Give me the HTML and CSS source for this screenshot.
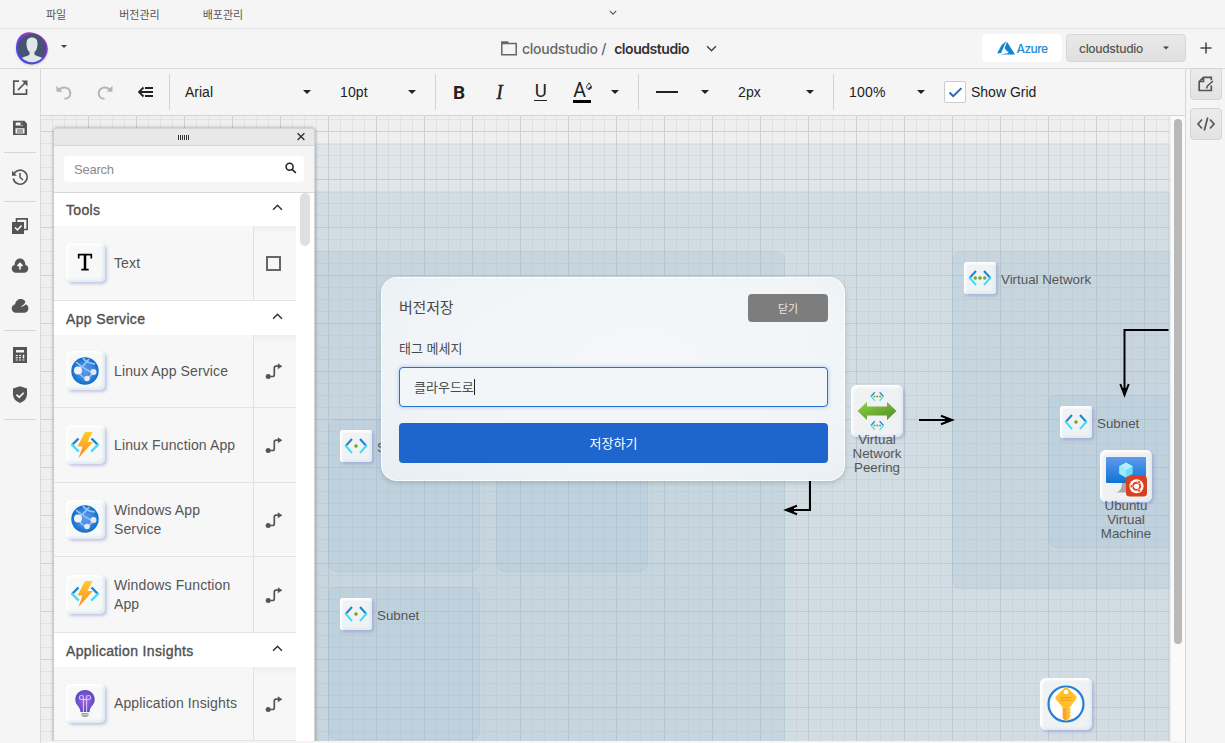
FILE: index.html
```html
<!DOCTYPE html>
<html lang="ko">
<head>
<meta charset="utf-8">
<title>cloudstudio</title>
<link rel="stylesheet" href="styles.css">
</head>
<body>
<svg class="defs" aria-hidden="true">
  <defs>
    <linearGradient id="gBlue" x1="0" y1="0" x2="0" y2="1"><stop offset="0" stop-color="#5e9bee"/><stop offset="1" stop-color="#0f74d2"/></linearGradient>
    <radialGradient id="gGlobe"><stop offset="0" stop-color="#5c9bf0"/><stop offset=".55" stop-color="#4088e2"/><stop offset="1" stop-color="#0b6fcc"/></radialGradient>
    <linearGradient id="gBolt" x1="0" y1="0" x2="0" y2="1"><stop offset="0" stop-color="#ffcb2e"/><stop offset="1" stop-color="#fb8c22"/></linearGradient>
    <linearGradient id="gGreen" x1="0" y1="0" x2="1" y2="1"><stop offset="0" stop-color="#8ad640"/><stop offset="1" stop-color="#55872d"/></linearGradient>
    <radialGradient id="gBulb"><stop offset="0" stop-color="#a667e0"/><stop offset="1" stop-color="#6049c4"/></radialGradient>
  </defs>
  <symbol id="caret" viewBox="0 0 8 4"><path d="M0 0h8L4 4z" fill="currentColor"/></symbol>
  <symbol id="chev" viewBox="0 0 10 6"><path d="M1 1l4 4 4-4" fill="none" stroke="currentColor" stroke-width="1.4"/></symbol>
  <symbol id="globe" viewBox="0 0 28 28">
    <circle cx="14" cy="14" r="13.7" fill="url(#gGlobe)"/>
    <path d="M5 5q8 7 19 12M12 1q3 5 12 6M7 13Q13 9 18 2M7 14q3 6 9 8l7-7" fill="none" stroke="#9cc6f4" stroke-width="1.6"/>
    <circle cx="7" cy="13.5" r="4" fill="#f2f2f2"/><circle cx="22.5" cy="15" r="3" fill="#e4e8ee"/><circle cx="16" cy="21.5" r="2.8" fill="#e6e9ee"/>
  </symbol>
  <symbol id="func" viewBox="0 0 30 26">
    <path d="M8.500 6.500L2 13" stroke="#1885d9" stroke-width="2.400"/><path d="M1.600 12.400l7.200 7.200" stroke="#45ddf6" stroke-width="2.400"/>
    <path d="M21.500 6.500L28 13" stroke="#1885d9" stroke-width="2.400"/><path d="M28.400 12.400l-7.200 7.200" stroke="#45ddf6" stroke-width="2.400"/>
    <path d="M15 0h7.500l-5 10h5.500L8.500 26l4-11.500H7.500z" fill="url(#gBolt)"/>
  </symbol>
  <symbol id="bulb" viewBox="0 0 20 27">
    <path d="M10 0C4.300 0 .3 4.300.3 9.500c0 6 5 6.800 5.200 12.500h9c.2-5.700 5.200-6.500 5.200-12.500C19.700 4.300 15.700 0 10 0z" fill="url(#gBulb)"/>
    <path d="M8.400 22V9.500H6.300a2 2 0 1 1 2.100-2.100v2.100h3.200V7.400a2 2 0 1 1 2.100 2.100h-2.100V22" fill="none" stroke="#d9c6f4" stroke-width="1.100"/>
    <path d="M6.500 23h7v2.500L12 27H8l-1.500-1.500z" fill="#a5a5a5"/><path d="M6.500 24.700h7" stroke="#ddd" stroke-width=".7"/>
  </symbol>
  <symbol id="subnet" viewBox="0 0 24 16">
    <path d="M8 1L1.600 8" stroke="#1e85d6" stroke-width="2"/><path d="M1.400 7.500L8 15" stroke="#46dcf6" stroke-width="2"/>
    <path d="M16 1l6.400 7" stroke="#1e85d6" stroke-width="2"/><path d="M22.600 7.500L16 15" stroke="#46dcf6" stroke-width="2"/>
    <circle cx="12" cy="8" r="1.800" fill="#6da832"/>
  </symbol>
  <symbol id="vnet" viewBox="0 0 24 16">
    <use href="#subnet" width="24" height="16"/><circle cx="7.300" cy="8" r="1.700" fill="#6da832"/><circle cx="16.700" cy="8" r="1.700" fill="#6da832"/>
  </symbol>
  <symbol id="route" viewBox="0 0 18 18">
    <path d="M3 14.500h4.500c1.300 0 1.800-.6 1.800-1.800V6c0-1.200.6-1.900 1.800-1.900H14" fill="none" stroke="#555" stroke-width="1.700"/>
    <circle cx="3.200" cy="14.500" r="2.500" fill="#555"/><path d="M12.800 1.200L17.300 4.200l-4.500 3z" fill="#555"/>
  </symbol>
</svg>

<div class="app">
  <nav class="menubar">
    <span>파일</span><span>버전관리</span><span>배포관리</span>
    <svg class="menubar-toggle"><use href="#chev"/></svg>
  </nav>

  <header class="header">
    <div class="user">
      <svg class="avatar" viewBox="0 0 34 34">
        <defs><linearGradient id="ring" x1="0" y1="1" x2=".6" y2="0"><stop offset=".3" stop-color="#4a49ee"/><stop offset="1" stop-color="#b52cc8"/></linearGradient>
        <clipPath id="face"><circle cx="17" cy="17" r="14.200"/></clipPath></defs>
        <path d="M14.500 1.300C24 1.500 33 9 32.800 18A15.900 15.900 0 0 1 1 17C1 8 6 1.300 14.500 1.300z" fill="url(#ring)"/>
        <circle cx="17" cy="17" r="14.200" fill="#475373"/>
        <g clip-path="url(#face)"><path d="M17 6.500c-4 0-5.800 2.500-5.500 7 .2 4 1.500 6.500 3 7.500v2.500c-2 2-7 2-8.500 4.500L17 34l11-6c-1.500-2.500-6.500-2.500-8.500-4.500V21c1.500-1 2.800-3.500 3-7.500.3-4.500-1.500-7-5.500-7z" fill="#e0e7e9"/></g>
      </svg>
      <svg class="caret caret-sm"><use href="#caret"/></svg>
    </div>
    <div class="crumbs">
      <svg class="folder" viewBox="0 0 16 15"><path d="M.8 2.500h14.400v11.200H.8zM.8 2.500V1h5.700l1 1.500" fill="none" stroke="#666" stroke-width="1.500"/><path d="M1 1h6v2H1z" fill="#666"/></svg>
      <span class="crumb-parent">cloudstudio /</span>
      <span class="crumb-current">cloudstudio</span>
      <svg class="crumb-chev"><use href="#chev"/></svg>
    </div>
    <div class="header-actions">
      <div class="provider">
        <svg viewBox="0 0 18 14"><path d="M9.300 0L4.500 4.200.2 12.200H4zM10 .8L7.500 7.300l4.300 4.700-8.200 1.600H18z" fill="#0f84d0"/></svg>
        <span>Azure</span>
      </div>
      <div class="project"><span>cloudstudio</span><svg class="caret caret-md"><use href="#caret"/></svg></div>
      <svg class="plus" viewBox="0 0 12 12"><path d="M6 .5v11M.5 6h11" stroke="#444" stroke-width="1.500"/></svg>
    </div>
  </header>

  <div class="body">
    <aside class="rail">
      <svg viewBox="0 0 16 16"><path d="M7 1.200H1.800v13H14.500V9" fill="none" stroke="#555" stroke-width="1.700"/><path d="M6 10l7-7" stroke="#555" stroke-width="1.700"/><path d="M9.500.5H15.500v6z" fill="#555"/></svg>
      <svg viewBox="0 0 16 16"><path d="M1 .8h11.300L15 3.500V15H1z" fill="#555"/><path d="M3.700 2.400h7.300v3.200H3.700zM3.500 8.200h9v5.300h-9z" fill="#f4f4f4"/><path d="M8.500 2.400H11v2.500H8.500z" fill="#555"/><path d="M5 10h6M5 12h6" stroke="#555"/></svg>
      <hr>
      <svg viewBox="0 0 16 16"><path d="M1.500 6A7 7 0 1 1 1.300 9.500" fill="none" stroke="#555" stroke-width="1.600"/><path d="M0 1.800v4.900h4.900z" fill="#555"/><path d="M8 4v4.200l3 2.800" fill="none" stroke="#555" stroke-width="1.500"/></svg>
      <hr>
      <svg viewBox="0 0 16 16"><path d="M4.500 4V.9h10.700v10.600H12" fill="none" stroke="#555" stroke-width="1.600"/><path d="M0 4h12v12H0z" fill="#555"/><path d="M3 9.500l2.500 2.500L9.500 7.500" fill="none" stroke="#fff" stroke-width="1.500"/></svg>
      <svg viewBox="0 0 16 16"><path d="M4 14.700C1.500 14.700-.3 13-.3 10.700c0-2 1.300-3.500 3-3.900C2.500 3 5 .5 8 .5s5.500 2.500 5.300 6.300c1.700.4 3 1.900 3 3.900 0 2.300-1.800 4-4.300 4z" fill="#555"/><path d="M8 11.500V6M5.500 8.100L8 5.500l2.500 2.600" fill="none" stroke="#fff" stroke-width="1.600"/></svg>
      <svg viewBox="0 0 16 16"><path d="M4 14.700C1.500 14.700-.3 13-.3 10.500c0-2.300 1.500-4 3.500-4.300C3.500 3 6 1 9 1c1.900 0 3.600 1 4.400 2.500-.8 3-2.700 4-5 5.200 3-.2 4.800-1.500 5.500-2.500 1.700.8 2.500 2.400 2.500 4.300 0 2.400-1.800 4.200-4.200 4.200z" fill="#555"/></svg>
      <hr>
      <svg viewBox="0 0 16 16"><path d="M1 0h14v16H1z" fill="#555"/><path d="M4 3h8v2.500H4z" fill="#f4f4f4"/><path d="M3.800 8.500h2M7 8.500h2M3.800 10.700h2M7 10.700h2M3.800 13h2M7 13h2M10.500 13h2" stroke="#f4f4f4" stroke-width="1.200"/><path d="M11.500 7.800v3.600" stroke="#f4f4f4" stroke-width="1.500"/></svg>
      <svg viewBox="0 0 16 16"><path d="M8-.8L15 1.600v5.500c0 4.500-3 7.500-7 9-4-1.500-7-4.500-7-9V1.600z" fill="#555"/><path d="M4.500 7.600l2.700 2.700 4.500-4.600" fill="none" stroke="#fff" stroke-width="1.600"/></svg>
      <hr>
    </aside>

    <main class="work">
      <div class="toolbar">
        <div class="tg tg-history">
          <svg viewBox="0 0 16 16"><path d="M3 5.500C8 1.500 14.300 4 14.300 9.300c0 3.300-2.300 5.500-5.800 5.500" fill="none" stroke="#b5b5b5" stroke-width="2"/><path d="M.5 1.800v6h6z" fill="#b5b5b5"/></svg>
          <svg viewBox="0 0 16 16"><path d="M13 5.500C8 1.500 1.700 4 1.700 9.300c0 3.300 2.300 5.500 5.800 5.500" fill="none" stroke="#b5b5b5" stroke-width="2"/><path d="M15.500 1.800v6h-6z" fill="#b5b5b5"/></svg>
          <svg viewBox="0 0 16 16"><path d="M7 4h8M1.500 8H15M7 12h8M5.500 3.500L1 8l4.500 4.500" fill="none" stroke="#222" stroke-width="1.800"/></svg>
        </div>
        <div class="tg tg-font">
          <span class="select sel-family">Arial<svg class="caret"><use href="#caret"/></svg></span>
          <span class="select sel-size">10pt<svg class="caret"><use href="#caret"/></svg></span>
        </div>
        <div class="tg tg-style">
          <b class="t-bold">B</b><i class="t-italic">I</i><span class="t-under">U</span>
          <span class="t-color">A<svg viewBox="0 0 7 8"><path d="M3.500.3L6 4a2.800 2.800 0 1 1-5 0z" fill="none" stroke="#222"/><path d="M6 4c1 3-1 4-4 3z" fill="#222"/></svg></span>
          <svg class="caret"><use href="#caret"/></svg>
        </div>
        <div class="tg tg-line">
          <span class="dash"></span><svg class="caret"><use href="#caret"/></svg>
          <span class="select sel-width">2px<svg class="caret"><use href="#caret"/></svg></span>
        </div>
        <div class="tg tg-view">
          <span class="select sel-zoom">100%<svg class="caret"><use href="#caret"/></svg></span>
          <span class="check"><svg viewBox="0 0 16 12"><path d="M1.500 6l4 4L14.500 1.200" fill="none" stroke="#2268b2" stroke-width="2.200"/></svg></span>
          <span class="show-grid">Show Grid</span>
        </div>
      </div>

      <div class="stage">
        <div class="canvas">
          <div class="zone z-sub"></div>
          <div class="zone z-group"></div>
          <div class="zone z-vnet-a"></div>
          <div class="zone z-vnet-b"></div>
          <div class="zone z-s1"></div>
          <div class="zone z-s2"></div>
          <div class="zone z-s3"></div>
          <div class="zone z-s4"></div>

          <svg class="wires" viewBox="41 116 1129 625">
            <g fill="none" stroke="#000" stroke-width="2">
              <path d="M919 420h30"/><path d="M941 415.800l11 4.200-11 4.200"/>
              <path d="M1168.500 330H1124.500v62"/><path d="M1120.300 384l4.200 11 4.200-11"/>
              <path d="M810 470v40H788"/><path d="M797 505.800L786 510l11 4.200"/>
            </g>
            <path d="M945 417.500l9 2.500-9 2.500zM1122 388l2.500 9.500 2.500-9.500zM794 507.500l-9.500 2.500 9.500 2.500z"/>
          </svg>

          <div class="tag n-s1"><span class="tile tile-sm"><svg><use href="#subnet"/></svg></span>Subnet</div>
          <div class="tag n-s3"><span class="tile tile-sm"><svg><use href="#subnet"/></svg></span>Subnet</div>
          <div class="tag n-vnet"><span class="tile tile-sm"><svg><use href="#vnet"/></svg></span>Virtual Network</div>
          <div class="tag n-s4"><span class="tile tile-sm"><svg><use href="#subnet"/></svg></span>Subnet</div>

          <div class="node n-peer">
            <span class="tile tile-lg"><svg viewBox="0 0 52 52"><path d="M6.500 26l9.500-9v4.500h20V17l9.500 9-9.500 9v-4.500H16V35z" fill="url(#gGreen)"/><use href="#vnet" x="19" y="6.500" width="14.500" height="10"/><use href="#vnet" x="19" y="35.500" width="14.500" height="10"/></svg></span>
            <span>Virtual<br>Network<br>Peering</span>
          </div>
          <div class="node n-vm">
            <span class="tile tile-lg"><svg viewBox="0 0 52 52">
              <path d="M22 33h8c0 5 1 7.500 4 9.500H16c4-1.500 6-4 6-9.500z" fill="#aaa"/>
              <rect x="6" y="7" width="40" height="26" rx="1" fill="url(#gBlue)"/>
              <path d="M26 12.500l6.700 3.800v7.400L26 27.500l-6.700-3.800v-7.400z" fill="#6fdcf7"/><path d="M26 12.500l6.700 3.800L26 20l-6.700-3.700z" fill="#b3f0fc"/><path d="M26 20v7.500l-6.700-3.800v-7.400z" fill="#9be9fb"/>
              <rect x="26" y="26" width="21" height="20.500" rx="3.500" fill="#d9401f"/><circle cx="36.500" cy="36.300" r="7" fill="#fff"/>
              <circle cx="36.500" cy="36.300" r="3.600" fill="none" stroke="#d9401f" stroke-width="1.900"/>
              <g fill="#d9401f" stroke="#fff" stroke-width=".6"><circle cx="31.500" cy="36.300" r="1.500"/><circle cx="39" cy="32" r="1.500"/><circle cx="39" cy="40.600" r="1.500"/></g></svg></span>
            <span>Ubuntu<br>Virtual<br>Machine</span>
          </div>
          <div class="node n-key">
            <span class="tile tile-lg"><svg viewBox="0 0 52 52"><circle cx="26" cy="26" r="17.500" fill="#fff" stroke="#2380d8" stroke-width="2.200"/>
              <path d="M24.800 9.500q1.200-1 2.400 0l8.700 8.200q1.300 1.300.5 3L31 28q-1.500 1.400-1.500 2l1.500 1.500-1.500 1.500 1.500 1.600-1.500 1.500 1.500 1.600-1.500 1.500v1.500L26 43l-3.200-2.500V30q0-1-1.500-2.300l-5.500-6.500q-1-1.700.4-3.200z" fill="#ffc02c"/><path d="M22.800 30h3.500v13l-3.500-2.500z" fill="#fda12a"/><circle cx="26" cy="14" r="2.300" fill="#fff"/><path d="M20.500 19.600h11M20.500 22.300h11" stroke="#fb9f22" stroke-width="1.300"/></svg></span>
          </div>
        </div>
        <div class="vscroll"><div class="vthumb"></div></div>

        <section class="panel">
          <div class="panel-bar"><span class="grip"></span><svg class="close" viewBox="0 0 10 10"><path d="M1.600 1.300l6.800 6.800M8.400 1.300L1.600 8.100" stroke="#333" stroke-width="1.400"/></svg></div>
          <div class="panel-search"><div class="search"><span>Search</span><svg viewBox="0 0 12 12"><circle cx="4.600" cy="4.800" r="3.500" fill="none" stroke="#222" stroke-width="1.500"/><path d="M7.200 7.400l3.600 3.600" stroke="#222" stroke-width="1.700"/></svg></div></div>
          <div class="panel-body">
            <div class="list">
              <h3>Tools<svg><use href="#chev"/></svg></h3>
              <div class="row r-text"><div class="cell"><span class="tile"><svg class="i-text" viewBox="0 0 16 18"><path d="M1.700 5.500V1.700h12.600v3.800M4.300 16.700h7.400" fill="none" stroke="#000" stroke-width="1.700"/><path d="M8 1.500v15" stroke="#000" stroke-width="2.500"/></svg></span><span>Text</span></div><div class="kind"><i class="box"></i></div></div>
              <h3>App Service<svg><use href="#chev"/></svg></h3>
              <div class="row r1"><div class="cell"><span class="tile"><svg class="i-globe"><use href="#globe"/></svg></span><span>Linux App Service</span></div><div class="kind"><svg><use href="#route"/></svg></div></div>
              <div class="row r2 plain"><div class="cell"><span class="tile"><svg class="i-func"><use href="#func"/></svg></span><span>Linux Function App</span></div><div class="kind"><svg><use href="#route"/></svg></div></div>
              <div class="row r3 plain"><div class="cell"><span class="tile"><svg class="i-globe"><use href="#globe"/></svg></span><span>Windows App Service</span></div><div class="kind"><svg><use href="#route"/></svg></div></div>
              <div class="row r4 plain"><div class="cell"><span class="tile"><svg class="i-func"><use href="#func"/></svg></span><span>Windows Function App</span></div><div class="kind"><svg><use href="#route"/></svg></div></div>
              <h3>Application Insights<svg><use href="#chev"/></svg></h3>
              <div class="row r5"><div class="cell"><span class="tile"><svg class="i-bulb"><use href="#bulb"/></svg></span><span>Application Insights</span></div><div class="kind"><svg><use href="#route"/></svg></div></div>
            </div>
            <div class="panel-thumb"></div>
          </div>
        </section>
      </div>
    </main>

    <aside class="rail-right">
      <div class="rbtn"><svg viewBox="0 0 16 16"><path d="M13.300 9.500v5H1.200V5.500L5.500 1.300h7.800v3M5.500 1.300v4.200H1.200" fill="none" stroke="#555" stroke-width="1.700"/><path d="M8.500 12.500l1-2.500 5.500-5" fill="none" stroke="#555" stroke-width="1.500"/></svg></div>
      <div class="rbtn"><svg class="code" viewBox="0 0 18 14"><path d="M5 2.500L1 7l4 4.500M13 2.500L17 7l-4 4.500M10.700.5L7.300 13.500" fill="none" stroke="#555" stroke-width="1.700"/></svg></div>
    </aside>
  </div>
</div>

<div class="modal">
  <div class="modal-head"><h2>버전저장</h2><button class="btn-close">닫기</button></div>
  <div class="modal-label">태그 메세지</div>
  <div class="modal-input">클라우드로<span class="cursor"></span></div>
  <button class="btn-save">저장하기</button>
</div>
</body>
</html>
```
FILE: styles.css
```css
* { box-sizing: border-box; }
body {
  margin: 0;
  width: 1225px;
  height: 743px;
  overflow: hidden;
  background: #f5f5f5;
  color: #555;
  font-family: "Liberation Sans", "Noto Sans CJK KR", sans-serif;
}
svg { display: block; flex: none; overflow: visible; }
.defs { position: absolute; width: 0; height: 0; }
.app { display: flex; flex-direction: column; height: 743px; }
.caret { width: 8px; height: 4px; color: #222; }

/* top menu */
.menubar {
  display: flex;
  align-items: center;
  position: relative;
  height: 29px;
  padding: 0 46px;
  gap: 43px;
  border-bottom: 1px solid #e3e3e3;
  font: 11px "Noto Sans CJK KR", sans-serif;
}
.menubar span:first-child { margin-right: 10px; }
.menubar-toggle { position: absolute; left: 609px; top: 10px; width: 8px; height: 5px; color: #555; }

/* header */
.header {
  display: grid;
  grid-template-columns: 1fr auto 1fr;
  align-items: center;
  height: 40px;
  padding-bottom: 1px;
  border-bottom: 1px solid #d9d9d9;
}
.user { display: flex; align-items: center; gap: 12px; padding-left: 15px; }
.avatar { width: 34px; height: 34px; filter: drop-shadow(0 1px 1px rgba(0,0,0,.15)); }
.caret-sm { width: 6px; height: 3px; margin-top: -4px; color: #444; }
.crumbs { display: flex; align-items: center; font: 500 14px Inter, sans-serif; color: #666; padding-right: 7px; }
.folder { width: 16px; height: 15px; margin-right: 5px; }
.crumb-parent { white-space: nowrap; letter-spacing: -.25px; }
.crumb-current { color: #333; font-weight: 600; margin-left: 8px; letter-spacing: -.45px; }
.crumb-chev { width: 11px; height: 7px; margin-left: 17px; color: #444; }
.header-actions { display: flex; justify-content: flex-end; align-items: center; margin-left: -7px; }
.provider {
  display: flex; align-items: center; justify-content: center; gap: 2px;
  width: 80px; height: 28px; border-radius: 4px; background: #fff;
  color: #1e8ad2; font: 500 12px Inter, sans-serif; letter-spacing: -.6px;
}
.provider svg { width: 18px; height: 14px; margin-top: -1px; }
.project {
  display: flex; align-items: center; justify-content: space-between;
  width: 120px; height: 28px; margin-left: 4px; padding: 0 16px 0 12px;
  border: 1px solid #d6d6d6; border-radius: 4px;
  background: linear-gradient(#e9e9e9, #dfdfdf);
  font: 500 12px Inter, sans-serif; letter-spacing: -.3px; color: #555;
}
.caret-md { width: 6px; height: 4px; color: #444; }
.plus { width: 12px; height: 12px; margin: 0 13px 0 14px; }

/* left rail */
.body { display: flex; flex: 1; min-height: 0; }
.rail {
  display: flex; flex-direction: column; align-items: center;
  width: 41px; padding-top: 11px; gap: 24px;
  border-right: 1px solid #d9d9d9;
}
.rail svg { width: 16px; height: 16px; }
.rail hr { width: 32px; height: 1px; margin: -8px 0; border: 0; background: #d5d5d5; }

/* workspace */
.work { display: flex; flex-direction: column; flex: 1; min-width: 0; border-right: 1px solid #d6d6d6; }
.toolbar {
  display: flex; align-items: center;
  height: 47px; border-bottom: 1px solid #d4d4d4;
  color: #222; font-size: 14px;
}
.tg { display: flex; align-items: center; height: 36px; border-right: 1px solid #d3d3d3; }
.tg:last-child { border-right: 0; }
.select { display: flex; align-items: center; justify-content: space-between; }
.tg-history { width: 129px; padding-left: 15px; gap: 25px; }
.tg-history svg { width: 16px; height: 16px; }
.tg-font { width: 266px; padding-left: 15px; }
.sel-family { width: 126px; margin-right: 29px; }
.sel-size { width: 76px; letter-spacing: .15px; }
.tg-style { width: 203px; }
.t-bold { margin-left: 17px; font: 700 19px Roboto, sans-serif; }
.t-italic { margin-left: 31px; width: 10px; font: italic 20px "Liberation Serif", serif; -webkit-text-stroke: .3px #222; }
.t-under { margin-left: 28px; width: 13px; height: 18px; line-height: 17px; border-bottom: 1px solid #222; font-family: Roboto, sans-serif; font-size: 18.500px; text-align: center; }
.t-color { display: flex; margin-left: 26px; width: 18px; height: 21px; line-height: 17px; border-bottom: 3px solid #000; font-family: Roboto, sans-serif; font-size: 19.500px; margin-top: 1px; }
.t-color svg { width: 6px; height: 8px; }
.t-color + .caret { margin-left: 20px; }
.tg-line { width: 195px; padding-left: 17px; }
.dash { width: 22px; height: 2px; margin-right: 23px; background: #222; }
.sel-width { width: 76px; margin-left: 29px; letter-spacing: .15px; }
.tg-view { padding-left: 15px; }
.sel-zoom { width: 76px; letter-spacing: .25px; }
.check { display: flex; align-items: center; justify-content: center; width: 22px; height: 22px; margin-left: 19px; border: 1px solid #ccc; border-radius: 2px; background: #fff; }
.check svg { width: 15px; height: 11px; }
.show-grid { margin-left: 5px; }

.stage { display: flex; position: relative; flex: 1; min-height: 0; overflow: hidden; border-bottom: 2px solid #f5f5f5; background: #fafafa; }
.canvas {
  position: relative; overflow: hidden; width: 1129px;
  background-color: #efefef;
  background-image:
    linear-gradient(90deg, #d0d0d0 1px, transparent 1px),
    linear-gradient(#d0d0d0 1px, transparent 1px),
    linear-gradient(90deg, #e2e2e2 1px, transparent 1px),
    linear-gradient(#e2e2e2 1px, transparent 1px);
  background-size: 48px 48px, 48px 48px, 12px 12px, 12px 12px;
  background-position: 47px 0, 0 15px, 11px 0, 0 3px;
}
.vscroll { width: 15px; padding: 3px 0 0 4px; border-left: 1px solid #ececec; }
.vthumb { width: 8px; height: 525px; margin-left: -1px; border-radius: 4px; background: #b9b9b9; }

/* diagram: positions are canvas coordinates */
.zone { position: absolute; border-radius: 9px; border: 1px solid rgba(110,160,195,.1); background: rgba(155,191,207,.2); }
.z-sub { left: 100px; top: 28px; width: 1200px; height: 800px; background: rgba(164,189,209,.2); }
.z-group { left: 150px; top: 76px; width: 1200px; height: 800px; background: rgba(154,189,203,.2); }
.z-vnet-a { left: 200px; top: 135px; width: 544px; height: 700px; }
.z-vnet-b { left: 911px; top: 135px; width: 400px; height: 338px; }
.z-s1, .z-s2, .z-s3, .z-s4 { width: 152px; height: 153px; background: rgba(159,190,218,.2); }
.z-s1 { left: 287px; top: 303px; }
.z-s2 { left: 455px; top: 303px; }
.z-s3 { left: 287px; top: 471px; }
.z-s4 { left: 1007px; top: 279px; }
.wires { position: absolute; left: 0; top: 0; width: 1129px; height: 625px; }

.tile {
  display: flex; align-items: center; justify-content: center; flex: none;
  width: 39px; height: 39px; border-radius: 5px; background: #f7f8f8;
  box-shadow: inset 2px 2px 3px #fff, inset -2px -2px 3px #dcebf1, 2px 2px 3px rgba(130,130,205,.42);
}
.tile-sm { width: 32px; height: 32px; border-radius: 3px; background: #f0f2f4; margin-right: 5px; }
.tile-sm svg { width: 24px; height: 16px; }
.tile-lg { width: 52px; height: 52px; border-radius: 6px; background: #f0f1f3; }
.tile-lg svg { width: 52px; height: 52px; }
.tag { position: absolute; display: flex; align-items: center; font-size: 13.33px; white-space: nowrap; height: 34px; }
.tag .tile { align-self: flex-start; }
.node { position: absolute; display: flex; flex-direction: column; align-items: center; width: 80px; font-size: 13.33px; line-height: 14px; text-align: center; }
.node .tile + span { margin-top: -4px; position: relative; }
.n-s1 { left: 299px; top: 314px; }
.n-s3 { left: 299px; top: 482px; }
.n-vnet { left: 923px; top: 146px; }
.n-s4 { left: 1019px; top: 290px; }
.n-peer { left: 796px; top: 269px; }
.n-vm { left: 1045px; top: 334px; }
.n-vm .tile + span { margin-top: -3px; }
.n-key { left: 985px; top: 562px; }

/* floating palette */
.panel {
  position: absolute; left: 13px; top: 12px; width: 261px; height: 613px;
  display: flex; flex-direction: column; overflow: hidden;
  border: solid #d4d4d4; border-width: 1px 1px 0 0; border-radius: 4px 4px 0 0;
  background: #fff; box-shadow: 0 0 3px 1px rgba(70,70,90,.3);
}
.panel-bar { display: flex; align-items: center; height: 17px; flex: none; border-bottom: 1px solid #d5d5d5; background: #e8e8e8; }
.grip { width: 11px; height: 5px; margin-left: 124px; background: repeating-linear-gradient(90deg, #333 0 1px, transparent 1px 2px); }
.close { width: 10px; height: 10px; margin-left: 107px; }
.panel-search { height: 47px; flex: none; padding: 10px; border-bottom: 1px solid #d9d9d9; background: #f5f5f5; }
.search { display: flex; align-items: center; justify-content: space-between; width: 240px; height: 26px; padding: 0 7px 0 10px; border-radius: 4px; background: #fff; color: #8b8b8b; font-size: 13px; letter-spacing: -.25px; }
.search svg { width: 12px; height: 12px; margin-top: -2px; }
.panel-body { display: flex; flex: 1; min-height: 0; }
.list { width: 242px; }
.list h3 { display: flex; align-items: center; justify-content: space-between; height: 34px; margin: 0; padding: 2px 13px 0 12px; color: #505050; font-size: 14px; font-weight: 400; letter-spacing: .35px; -webkit-text-stroke: .35px #505050; }
.list h3 svg { width: 11px; height: 7px; color: #333; transform: rotate(180deg); margin-top: -6px; }
.list h3:first-child { height: 33px; padding-top: 1px; }
.row { display: flex; border-bottom: 1px solid #e2e2e2; background: #f7f7f7; }
.cell { display: flex; align-items: center; flex: 1; gap: 9px; padding: 0 8px 0 12px; font-size: 14px; line-height: 19px; letter-spacing: .12px; }
.cell .tile { margin-top: -1px; }
.kind { display: flex; align-items: center; justify-content: center; width: 43px; padding-right: 3px; border-left: 1px solid #e1e1e1; background: linear-gradient(#efefef, #f7f7f7 8px); }
.plain .kind { background: none; }
.kind svg { width: 18px; height: 18px; }
.box { width: 15px; height: 15px; border: 2px solid #666; }
.r-text { height: 75px; }
.r1 { height: 73px; }
.r2 { height: 75px; }
.r3 { height: 74px; }
.r4 { height: 76px; }
.r5 { height: 74px; }
.i-text { width: 16px; height: 18px; margin: -1px 1px 0 0; }
.i-globe { width: 28px; height: 28px; margin-right: 1px; }
.i-func { width: 30px; height: 26px; margin-right: 1px; }
.i-bulb { width: 20px; height: 27px; margin-right: 1px; }
.panel-thumb { width: 10px; height: 53px; margin-left: 4px; border-radius: 5px; background: #dfdfdf; }

/* right rail */
.rail-right { display: flex; flex-direction: column; align-items: flex-end; gap: 8px; width: 39px; padding-right: 3px; margin-top: -1px; }
.rbtn { display: flex; align-items: center; justify-content: center; width: 32px; height: 32px; border: 1px solid #d5d5d5; border-radius: 4px; background: linear-gradient(#ececec, #e3e3e3); }
.rbtn svg { width: 16px; height: 16px; }
.rbtn .code { width: 18px; height: 14px; }

/* dialog */
.modal {
  position: absolute; left: 381px; top: 277px; width: 464px; height: 204px;
  display: flex; flex-direction: column; padding: 17px 16px 17px 17px;
  border: 1px solid rgba(255,255,255,.8); border-radius: 16px;
  background: radial-gradient(ellipse at 55% 40%, #f5f7fa 0, #f1f5f8 60%, #e8eef2 100%);
  box-shadow: 0 2px 5px rgba(60,90,110,.25);
  font-family: "Noto Sans CJK KR", sans-serif; color: #4a4a4a;
}
.modal-head { display: flex; justify-content: space-between; height: 28px; margin-top: -1px; }
.modal h2 { margin: 0; font-size: 15px; font-weight: 400; line-height: 26px; letter-spacing: -.2px; }
.modal button { border: 0; border-radius: 4px; color: #fff; font-family: inherit; padding: 0 0 1px; }
.modal .btn-close { width: 80px; height: 28px; background: #7d7d7d; color: #e8e8e8; font-size: 11px; }
.modal-label { margin-top: 14px; height: 24px; line-height: 24px; font-size: 13px; }
.modal-input { display: flex; align-items: center; height: 40px; flex: none; margin-top: 7px; padding: 0 0 2px 14px; border: 1px solid #2b6fd0; border-radius: 4px; background: #f2f6f9; box-shadow: 0 0 4px rgba(30,102,207,.35); font-size: 13px; }
.cursor { width: 1px; height: 16px; margin-top: 1px; background: #222; }
.modal .btn-save { height: 40px; flex: none; margin-top: 16px; background: #1e66cd; font-size: 13px; padding-bottom: 2px; }
```
